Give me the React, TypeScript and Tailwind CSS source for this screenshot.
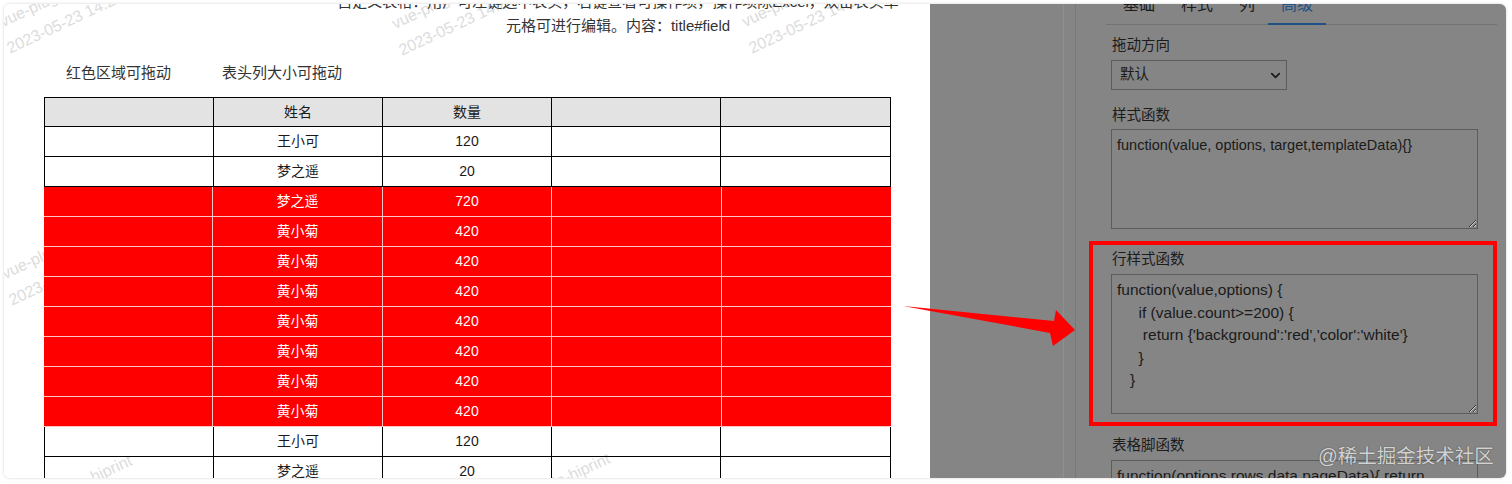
import { ChevronDown } from 'lucide-react'

const rows = [
  { name: '王小可', count: 120 },
  { name: '梦之遥', count: 20 },
  { name: '梦之遥', count: 720 },
  { name: '黄小菊', count: 420 },
  { name: '黄小菊', count: 420 },
  { name: '黄小菊', count: 420 },
  { name: '黄小菊', count: 420 },
  { name: '黄小菊', count: 420 },
  { name: '黄小菊', count: 420 },
  { name: '黄小菊', count: 420 },
  { name: '王小可', count: 120 },
  { name: '梦之遥', count: 20 },
]

// faint hiprint watermark, positioned per instance
const marks = [
  { left: -9, top: 6 },
  { left: 383, top: 8 },
  { left: 733, top: 6 },
  { left: -7, top: 258 },
  { left: 10, top: 495 },
  { left: 488, top: 493 },
]

const rowStyleFn =
  "function(value,options) {\n     if (value.count>=200) {\n      return {'background':'red','color':'white'}\n     }\n   }"

function DataTable() {
  return (
    <div className="mt-[14px] ml-[40px] w-[847px] text-[14px]">
      <div className="grid grid-cols-5 h-[30px] border border-black bg-[#e3e3e3] text-[#1a1a1a]">
        <div className="border-r border-black" />
        <div className="flex items-center justify-center border-r border-black">姓名</div>
        <div className="flex items-center justify-center border-r border-black">数量</div>
        <div className="border-r border-black" />
        <div />
      </div>
      {rows.map((r, i) =>
        r.count >= 200 ? (
          <div
            key={i}
            className="grid grid-cols-5 h-[30px] bg-[#fe0000] text-white border-b border-[#ffc4c4]"
          >
            <div className="border-r border-[#ffc4c4]" />
            <div className="flex items-center justify-center border-r border-[#ffc4c4]">{r.name}</div>
            <div className="flex items-center justify-center border-r border-[#ffc4c4]">{r.count}</div>
            <div className="border-r border-[#ffc4c4]" />
            <div />
          </div>
        ) : (
          <div key={i} className="grid grid-cols-5 h-[30px] border-x border-b border-black text-[#1a1a1a]">
            <div className="border-r border-black" />
            <div className="flex items-center justify-center border-r border-black">{r.name}</div>
            <div className="flex items-center justify-center border-r border-black">{r.count}</div>
            <div className="border-r border-black" />
            <div />
          </div>
        )
      )}
    </div>
  )
}

function Field({ label, children }: { label: string; children: React.ReactNode }) {
  return (
    <div>
      <div className="text-[14.5px] leading-[20px] text-[#1c1c1c] pl-[1px]">{label}</div>
      {children}
    </div>
  )
}

const areaCls =
  'block w-[367px] mt-[4px] px-[5px] py-[4px] bg-transparent border border-[#5c5c5c] leading-[22.5px] text-[#1a1a1a] outline-none'

export default function App() {
  return (
    <div className="w-[1512px] h-[484px] bg-white p-[4px] font-['Liberation_Sans','Noto_Sans_CJK_SC',sans-serif]">
      <div className="relative flex w-[1502px] h-[474px] rounded-[6px] overflow-hidden shadow-[0_0_3px_rgba(0,0,0,0.18)]">
        {/* left: preview page */}
        <div className="relative w-[926px] shrink-0 bg-white overflow-hidden">
          {marks.map((m, i) => (
            <div
              key={i}
              className="absolute origin-top-left -rotate-[25deg] text-[16px] leading-[27px] text-[#dcdcdc] whitespace-nowrap"
              style={{ left: m.left, top: m.top }}
            >
              <div>vue-plugin-hiprint</div>
              <div className="-ml-[5px]">2023-05-23 14:27</div>
            </div>
          ))}
          <div className="relative">
            <div className="mt-[-14px] ml-[314px] w-[600px] text-center whitespace-nowrap text-[15px] leading-[24px] text-[#333]">
              <div>自定义表格：用户可左键选中表头，右键查看可操作项，操作项除Excel，双击表头单</div>
              <div>元格可进行编辑。内容：title#field</div>
            </div>
            <div className="flex mt-[25px] pl-[62px] gap-[51px] text-[15px] leading-[20px] text-[#333]">
              <span>红色区域可拖动</span>
              <span>表头列大小可拖动</span>
            </div>
            <DataTable />
          </div>
        </div>

        {/* right: dimmed settings panel */}
        <div className="flex flex-1 bg-[#858585]">
          <div className="w-[133px] shrink-0" />
          <div className="w-[12px] shrink-0 border-l border-[#8f8f8f]" />
          <div className="flex-1 border-l border-[#787878] pl-[30px] pr-[23px]">
            <div className="flex mt-[-11px] border-b border-[#727272] text-[16px] leading-[24px] text-[#1c1c1c]">
              <div className="ml-[4px] px-[13px] pb-[6px] mb-[-1px] border-b-2 border-transparent">基础</div>
              <div className="px-[13px] pb-[6px] mb-[-1px] border-b-2 border-transparent">样式</div>
              <div className="px-[13px] pb-[6px] mb-[-1px] border-b-2 border-transparent">列</div>
              <div className="px-[13px] pb-[6px] mb-[-1px] border-b-2 border-[#215285] text-[#215285]">高级</div>
            </div>

            <div className="pl-[5px]">
              <div className="mt-[10px]">
                <Field label="拖动方向">
                  <div className="flex items-center justify-between w-[176px] h-[30px] mt-[5px] pl-[8px] pr-[3px] border border-[#5c5c5c] text-[14.5px] text-[#1a1a1a]">
                    <span>默认</span>
                    <ChevronDown size={15} strokeWidth={2.6} className="text-[#1a1a1a]" />
                  </div>
                </Field>
              </div>

              <div className="mt-[15px]">
                <Field label="样式函数">
                  <textarea
                    readOnly
                    defaultValue="function(value, options, target,templateData){}"
                    className={`${areaCls} h-[100px] text-[14.5px]`}
                  />
                </Field>
              </div>

              <div className="mt-[12px] -ml-[22px] w-[408px] border-[4px] border-[#ff0000] pt-[4px] pb-[8px] pl-[18px]">
                <Field label="行样式函数">
                  <textarea
                    readOnly
                    defaultValue={rowStyleFn}
                    className={`${areaCls} h-[140px] !mt-[5px] text-[15.5px]`}
                  />
                </Field>
              </div>

              <div className="mt-[9px]">
                <Field label="表格脚函数">
                  <textarea
                    readOnly
                    defaultValue="function(options,rows,data,pageData){ return"
                    className={`${areaCls} h-[100px] !mt-[5px] text-[15.5px]`}
                  />
                </Field>
              </div>
            </div>
          </div>
        </div>

        {/* annotation arrow */}
        <svg className="absolute left-0 top-0 pointer-events-none" width="1502" height="474">
          <polygon points="899,302 1050,317 1052,306 1071,326 1049,342 1046,329" fill="#ff0000" />
        </svg>

        {/* site watermark */}
        <div className="absolute left-[1314px] top-[439px] text-[19.5px] leading-[26px] text-[#d2d2d2] [text-shadow:0_0_1px_#555,0_0_1px_#555] pointer-events-none">
          @稀土掘金技术社区
        </div>
      </div>
    </div>
  )
}
